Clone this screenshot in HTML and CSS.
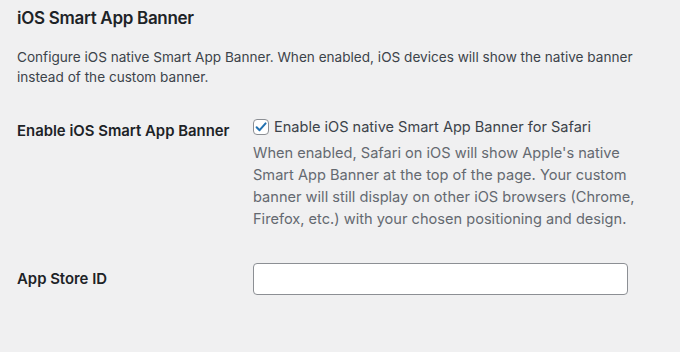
FILE: index.html
```html
<!DOCTYPE html>
<html>
<head>
<meta charset="utf-8">
<link rel="stylesheet" href="styles.css">
</head>
<body>
<div class="wrap">
  <h2 class="title">iOS Smart App Banner</h2>
  <p class="intro">Configure iOS native Smart App Banner. When enabled, iOS devices will show the native banner instead of the custom banner.</p>
  <div class="form">
    <div class="row row-check">
      <div class="label">Enable iOS Smart App Banner</div>
      <div class="field">
        <label class="check">
          <span class="box">
            <svg viewBox="0 0 16 16" width="16" height="16"><path d="M3.6 8.2 L6.6 11.2 L12.6 4.4" fill="none" stroke="#2271b1" stroke-width="2" stroke-linecap="round" stroke-linejoin="round"/></svg>
          </span>
          <span>Enable iOS native Smart App Banner for Safari</span>
        </label>
        <p class="desc">When enabled, Safari on iOS will show Apple's native Smart App Banner at the top of the page. Your custom banner will still display on other iOS browsers (Chrome, Firefox, etc.) with your chosen positioning and design.</p>
      </div>
    </div>
    <div class="row row-input">
      <div class="label">App Store ID</div>
      <div class="field">
        <input class="text" type="text">
      </div>
    </div>
  </div>
</div>
</body>
</html>
```
FILE: styles.css
```css
html, body {
  margin: 0;
  padding: 0;
  background: #f0f0f1;
}
body {
  font-family: Inter, "Noto Sans", sans-serif;
  color: #1d2327;
}
.wrap {
  padding: 0 0 0 17px;
}
.title {
  margin: 0;
  padding-top: 6px;
  font-size: 17px;
  letter-spacing: -0.3px;
  line-height: 24px;
  font-weight: 600;
  color: #1d2327;
}
.intro {
  margin: 17px 0 0;
  font-size: 13.6px;
  line-height: 20px;
  color: #3c434a;
  width: 660px;
}
.form {
  margin-top: 20px;
}
.row {
  display: grid;
  grid-template-columns: 236px 1fr;
}
.label {
  font-size: 14.9px;
  font-weight: 600;
  color: #1d2327;
}
.row-check .label {
  padding-top: 15px;
}
.check {
  display: flex;
  align-items: center;
  gap: 5px;
  font-size: 14.55px;
  color: #3c434a;
  height: 20px;
  margin-top: 10px;
}
.box {
  width: 16px;
  height: 16px;
  box-sizing: border-box;
  border: 1px solid #8c8f94;
  border-radius: 4px;
  background: #fff;
  display: flex;
}
.box svg {
  margin: -1px;
}
.desc {
  margin: 5px 0 0;
  font-size: 14.6px;
  line-height: 22px;
  color: #646970;
  width: 385px;
}
.row-input {
  margin-top: 33px;
  align-items: center;
}
.text {
  display: block;
  width: 375px;
  height: 32px;
  box-sizing: border-box;
  border: 1px solid #8c8f94;
  border-radius: 4px;
  background: #fff;
  margin: 0;
  padding: 0 8px;
}
```
